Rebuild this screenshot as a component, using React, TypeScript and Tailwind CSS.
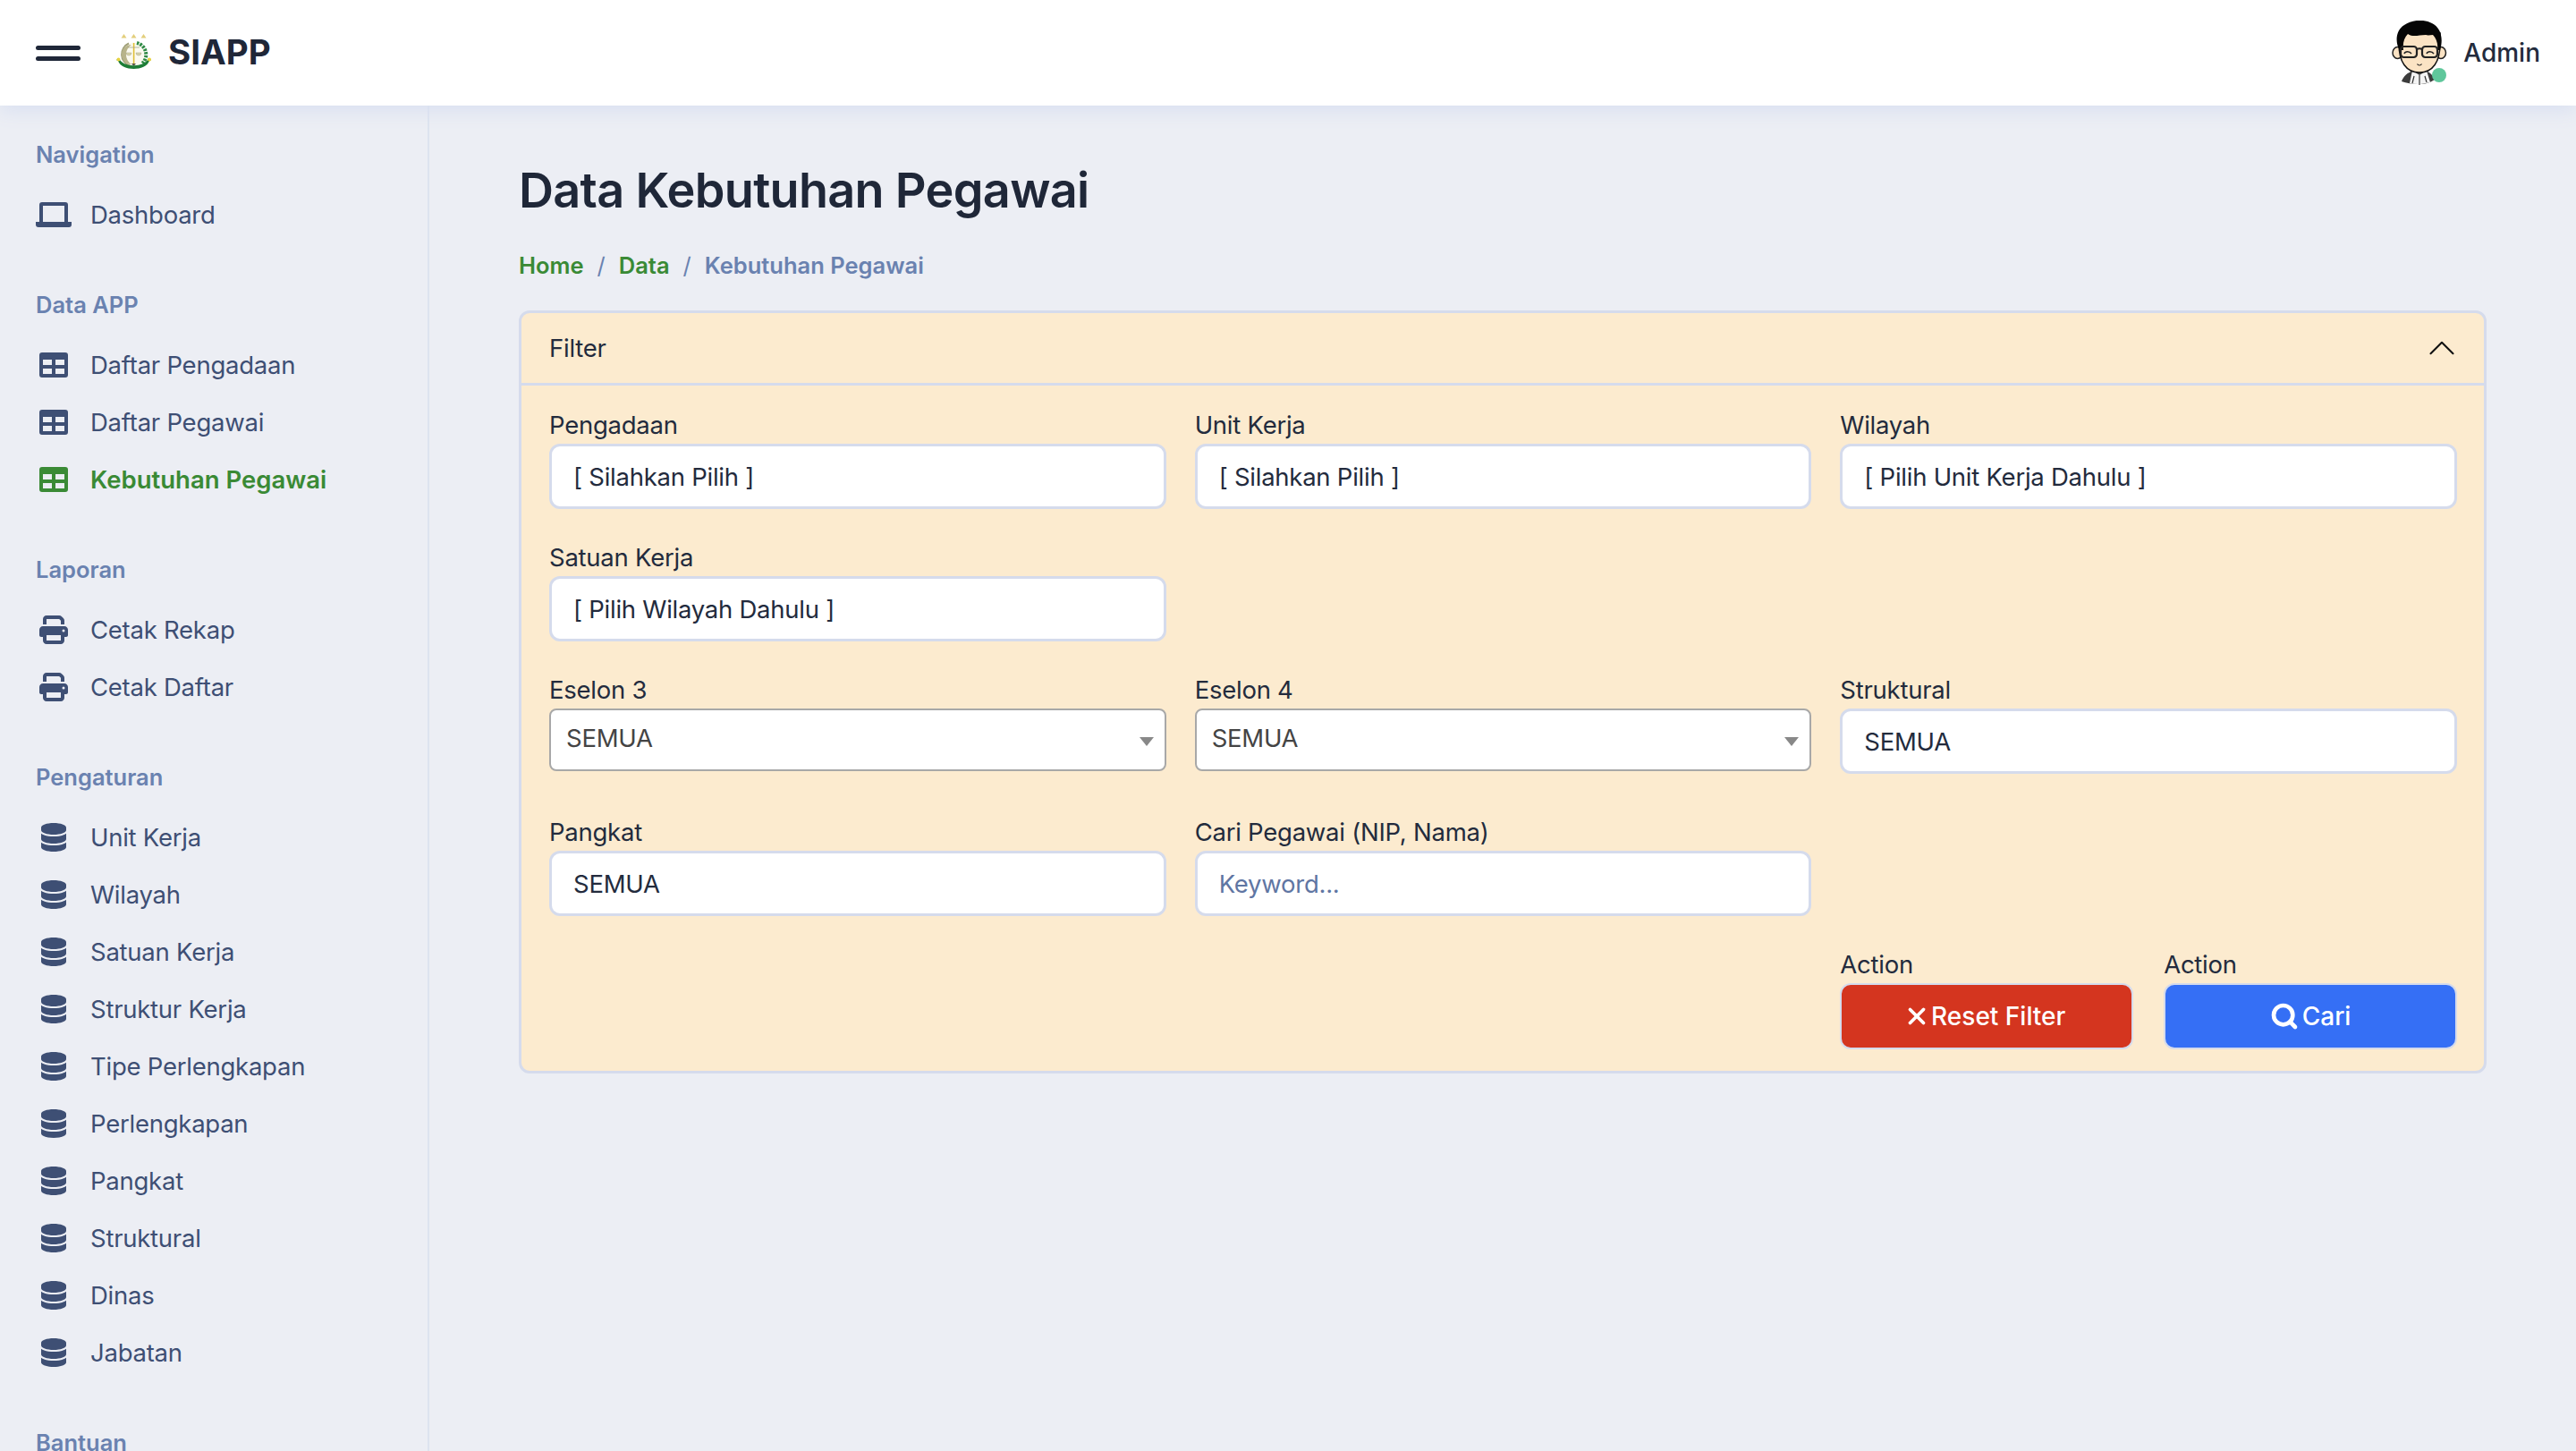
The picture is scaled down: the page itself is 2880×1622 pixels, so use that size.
import { ChevronUp, Search, X } from "lucide-react";
import { FaDatabase, FaPrint } from "react-icons/fa6";

function LaptopIcon() {
  return (
    <svg viewBox="0 0 40 28" className="h-[28px] w-[40px]" fill="currentColor">
      <path
        fillRule="evenodd"
        d="M7 0h26a3 3 0 0 1 3 3v19h-4V4H8v18H4V3a3 3 0 0 1 3-3z"
      />
      <path d="M0 22h40v3a3 3 0 0 1-3 3H3a3 3 0 0 1-3-3z" />
    </svg>
  );
}

function TableIcon() {
  return (
    <svg viewBox="0 0 32 28" className="h-[28px] w-[32px]" fill="currentColor">
      <path
        fillRule="evenodd"
        d="M3 0h26a3 3 0 0 1 3 3v22a3 3 0 0 1-3 3H3a3 3 0 0 1-3-3V3a3 3 0 0 1 3-3zM4 8v6h10V8zm14 0v6h10V8zM4 18v6h10v-6zm14 0v6h10v-6z"
      />
    </svg>
  );
}

function Logo() {
  return (
    <svg viewBox="0 0 40 42" className="h-[42px] w-[40px]">
      <path d="M8.500 0l3 4.500h-6zM19.500 0l3 4.500h-6zM30.500 0l3 4.500h-6z" fill="#e3cf7c" />
      <circle cx="19.500" cy="23" r="13.500" fill="#fbfaf0" />
      <path d="M23 10a13.500 13.500 0 0 1 6 23" fill="none" stroke="#2f8a45" strokeWidth="4" strokeDasharray="2.500 1.200" />
      <path d="M14 10.500a13.500 13.500 0 0 0 1 25" fill="none" stroke="#a0a078" strokeWidth="2" />
      <path d="M17 12a11 11 0 0 0 0 22 13 13 0 0 1 0-22z" fill="#b8b48a" />
      <path d="M18.800 10h1.600v24h-1.600z" fill="#e0bf36" />
      <path d="M13 15h13" stroke="#a5a58c" strokeWidth="0.800" />
      <path d="M11 21a3 3 0 0 0 6 0zM22 21a3 3 0 0 0 6 0z" fill="#d8d4aa" stroke="#a5a58c" strokeWidth="0.500" />
      <path d="M17 33l2.500 3 2.500-3z" fill="#555544" />
      <path d="M2 30c4 12 31 12 35 0l2-1-3-2c-4 11-29 11-33 0l-3 2z" fill="#1d7d36" />
      <circle cx="2.500" cy="28.500" r="2" fill="#e8d33f" />
      <circle cx="37" cy="28.500" r="2" fill="#e8d33f" />
    </svg>
  );
}

function Avatar() {
  return (
    <div className="relative h-[72px] w-[62px]">
      <svg viewBox="0 0 62 72" className="h-[72px] w-[62px]">
        <path d="M11 68c2-6 7-10 13-12h14c5 2 8 5 10 10-6 4-11 5-17 5-8 0-15-1-20-3z" fill="#3c3c3c" />
        <path d="M20 70l3-14 8 5 8-5 4 13c-8 2-15 3-23 1z" fill="#f4f4f4" />
        <path d="M31 61v11M25 62l-2 8M37 62l2 7" stroke="#333" strokeWidth="1.200" />
        <ellipse cx="6.500" cy="36" rx="5.500" ry="6.500" fill="#fbe3c4" stroke="#222" strokeWidth="1.500" />
        <ellipse cx="55" cy="36" rx="5.500" ry="6.500" fill="#fbe3c4" stroke="#222" strokeWidth="1.500" />
        <path d="M8 26c0 20 8 32 23 32s23-12 23-32V14H8z" fill="#fbe3c4" stroke="#111" strokeWidth="1.500" />
        <path d="M9 33C3 24 5 10 14 5 22-1 36-2 45 3c10 5 13 17 9 30h-3c1-7-1-13-5-17-3 0-5 1-8 0-8 0-14 3-20-1-4 4-6 10-5 18z" fill="#050505" />
        <rect x="10" y="29" width="18" height="12" rx="3.500" fill="none" stroke="#222" strokeWidth="2.200" />
        <rect x="34" y="29" width="17" height="12" rx="3.500" fill="none" stroke="#222" strokeWidth="2.200" />
        <path d="M28 32c2-1 4-1 6 0" fill="none" stroke="#222" strokeWidth="2.200" />
        <path d="M14 37c1-3 6-3 8 0M39 37c1-3 6-3 8 0" fill="none" stroke="#222" strokeWidth="1.500" />
        <path d="M28.500 48.500c1 2 4 2 5 0" fill="none" stroke="#222" strokeWidth="1.200" />
      </svg>
      <span className="absolute bottom-[3px] right-[1px] h-[16px] w-[16px] rounded-full bg-[#5fc79b]" />
    </div>
  );
}

type NavItem = { label: string; icon: "laptop" | "table" | "print" | "db"; active?: boolean };

const sections: { title: string; items: NavItem[] }[] = [
  { title: "Navigation", items: [{ label: "Dashboard", icon: "laptop" }] },
  {
    title: "Data APP",
    items: [
      { label: "Daftar Pengadaan", icon: "table" },
      { label: "Daftar Pegawai", icon: "table" },
      { label: "Kebutuhan Pegawai", icon: "table", active: true },
    ],
  },
  {
    title: "Laporan",
    items: [
      { label: "Cetak Rekap", icon: "print" },
      { label: "Cetak Daftar", icon: "print" },
    ],
  },
  {
    title: "Pengaturan",
    items: [
      "Unit Kerja",
      "Wilayah",
      "Satuan Kerja",
      "Struktur Kerja",
      "Tipe Perlengkapan",
      "Perlengkapan",
      "Pangkat",
      "Struktural",
      "Dinas",
      "Jabatan",
    ].map((label) => ({ label, icon: "db" as const })),
  },
  { title: "Bantuan", items: [] },
];

function NavIcon({ icon }: { icon: NavItem["icon"] }) {
  if (icon === "laptop") return <LaptopIcon />;
  if (icon === "table") return <TableIcon />;
  if (icon === "print") return <FaPrint className="h-[32px] w-[32px]" />;
  return <FaDatabase className="h-[32px] w-[28px]" />;
}

function Sidebar() {
  return (
    <aside className="flex w-[480px] shrink-0 flex-col gap-[49px] overflow-hidden border-r-[2px] border-[#dde3ef] pt-[35px] pl-[40px]">
      {sections.map((section) => (
        <div key={section.title}>
          <div className="mb-[15px] flex h-[40px] items-center text-[25.5px] font-semibold text-[#6a82b0]">
            {section.title}
          </div>
          {section.items.map((item) => (
            <div
              key={item.label}
              className={
                item.active
                  ? "flex h-[64px] items-center text-[27.500px] font-semibold text-[#3a8a35]"
                  : "flex h-[64px] items-center text-[27.500px] tracking-[-0.25px] text-[#3e4f74]"
              }
            >
              <span className="flex w-[61px] shrink-0 items-center justify-center pr-[21px]">
                <NavIcon icon={item.icon} />
              </span>
              <span className="pt-[1px]">{item.label}</span>
            </div>
          ))}
        </div>
      ))}
    </aside>
  );
}

function Label({ children }: { children: string }) {
  return (
    <label className="mb-[4px] block h-[34px] text-[27.500px] leading-[34px] tracking-[-0.25px] text-[#232b3d]">
      {children}
    </label>
  );
}

function TextField({ label, value, placeholder }: { label: string; value?: string; placeholder?: string }) {
  return (
    <div>
      <Label>{label}</Label>
      <input
        readOnly
        value={value}
        placeholder={placeholder}
        className="block h-[73px] w-full rounded-[12px] border-[3px] border-[#d5dbec] bg-white px-[24px] text-[27.500px] tracking-[-0.25px] text-[#232b3d] outline-none placeholder:text-[#5f76a3]"
      />
    </div>
  );
}

function SelectField({ label }: { label: string }) {
  return (
    <div>
      <Label>{label}</Label>
      <div className="flex h-[70px] items-center justify-between rounded-[8px] border-[2px] border-[#a8a8a8] bg-white pr-[12px] pl-[17px] text-[27.500px] tracking-[-0.25px] text-[#444444]">
        <span className="mb-[3px]">SEMUA</span>
        <span className="mt-[4px] h-0 w-0 border-x-[8px] border-t-[10px] border-x-transparent border-t-[#888888]" />
      </div>
    </div>
  );
}

function ActionButton({ color, children }: { color: string; children: React.ReactNode }) {
  return (
    <div>
      <Label>Action</Label>
      <button className={`flex h-[74px] w-full items-center justify-center gap-[6px] rounded-[12px] border-[2px] border-[#d5dbec] text-[28px] font-medium text-white ${color}`}>
        {children}
      </button>
    </div>
  );
}

function FilterCard() {
  return (
    <section className="rounded-[12px] border-[3px] border-[#d5dbec] bg-[#fcebcf]">
      <header className="flex h-[81px] items-center justify-between border-b-[3px] border-[#d5dbec] pr-[22px] pl-[31px] text-[27.500px] tracking-[-0.25px] text-[#232b3d]">
        Filter
        <ChevronUp className="h-[50px] w-[50px] text-[#111111]" strokeWidth={1} />
      </header>
      <div className="pt-[27px] pr-[30px] pb-[24px] pl-[31px]">
        <div className="grid grid-cols-3 gap-x-[32px] gap-y-[37px]">
          <TextField label="Pengadaan" value="[ Silahkan Pilih ]" />
          <TextField label="Unit Kerja" value="[ Silahkan Pilih ]" />
          <TextField label="Wilayah" value="[ Pilih Unit Kerja Dahulu ]" />
          <TextField label="Satuan Kerja" value="[ Pilih Wilayah Dahulu ]" />
        </div>
        <div className="mt-[37px] grid grid-cols-3 gap-x-[32px]">
          <SelectField label="Eselon 3" />
          <SelectField label="Eselon 4" />
          <TextField label="Struktural" value="SEMUA" />
        </div>
        <div className="mt-[48px] grid grid-cols-3 gap-x-[32px]">
          <TextField label="Pangkat" value="SEMUA" />
          <TextField label="Cari Pegawai (NIP, Nama)" placeholder="Keyword..." />
        </div>
        <div className="mt-[37px] grid grid-cols-3 gap-x-[32px]">
          <div className="col-start-3 grid grid-cols-2 gap-x-[34px]">
            <ActionButton color="bg-[#d4351f]">
              <X className="-mx-[5px] h-[30px] w-[30px]" strokeWidth={3} />
              Reset Filter
            </ActionButton>
            <ActionButton color="bg-[#356ff5]">
              <Search className="-mr-[2px] h-[32px] w-[32px]" strokeWidth={3.5} />
              Cari
            </ActionButton>
          </div>
        </div>
      </div>
    </section>
  );
}

export default function App() {
  return (
    <div className="flex h-screen flex-col overflow-hidden bg-[#eceef4] font-['Inter',sans-serif]">
      <nav className="relative z-10 flex h-[118px] shrink-0 items-center justify-between bg-white pr-[40px] pl-[40px] shadow-[0_6px_20px_#d9e0f1]">
        <div className="flex items-center">
          <div className="flex w-[50px] flex-col gap-[7px]">
            <span className="h-[5px] rounded-full bg-[#1f2738]" />
            <span className="h-[5px] rounded-full bg-[#1f2738]" />
          </div>
          <div className="ml-[40px]">
            <Logo />
          </div>
          <span className="ml-[18px] text-[38.500px] font-bold text-[#1f2738]">SIAPP</span>
        </div>
        <div className="flex items-center gap-[18px]">
          <Avatar />
          <span className="text-[28px] font-medium text-[#232b3d]">Admin</span>
        </div>
      </nav>
      <div className="flex min-h-0 flex-1">
        <Sidebar />
        <main className="min-w-0 flex-1 pr-[100px] pl-[100px]">
          <h1 className="mt-[60px] text-[54px] leading-[70px] font-semibold tracking-[-0.7px] text-[#1f2738]">
            Data Kebutuhan Pegawai
          </h1>
          <div className="mt-[30px] flex items-center gap-[15px] text-[25.5px] font-semibold">
            <span className="text-[#3a8a35]">Home</span>
            <span className="font-normal text-[#6a82b0]">/</span>
            <span className="text-[#3a8a35]">Data</span>
            <span className="font-normal text-[#6a82b0]">/</span>
            <span className="text-[#6a82b0]">Kebutuhan Pegawai</span>
          </div>
          <div className="mt-[31px]">
            <FilterCard />
          </div>
        </main>
      </div>
    </div>
  );
}
